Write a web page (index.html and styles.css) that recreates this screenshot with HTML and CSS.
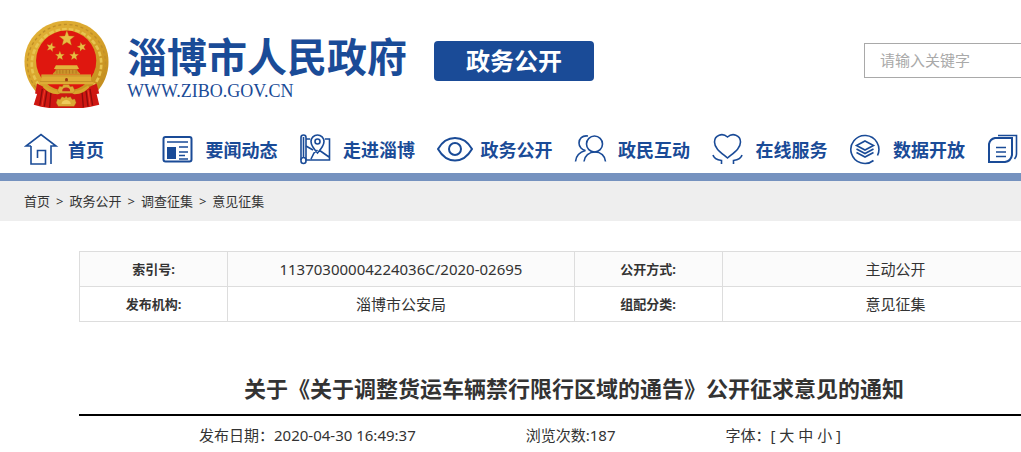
FILE: index.html
```
<!DOCTYPE html>
<html lang="zh-CN">

<head>
    <meta charset="UTF-8">
    <title>关于《关于调整货运车辆禁行限行区域的通告》公开征求意见的通知</title>
    <link rel="stylesheet" href="styles.css">
</head>

<body>

    <header class="header">
        <div class="wrap header-top">
            <a class="logo" href="#">
                <svg class="emblem" viewBox="27 28 256 272" aria-hidden="true">
                    <defs>
                        <linearGradient id="gold" x1="0" y1="0" x2="1" y2="1">
                            <stop offset="0" stop-color="#e3b43a" />
                            <stop offset=".5" stop-color="#d9a52c" />
                            <stop offset="1" stop-color="#c08a1c" />
                        </linearGradient>
                        <polygon id="star" points="0,-24 6,-8 23,-7 10,4 14,20 0,11 -14,20 -10,4 -23,-7 -6,-8" />
                    </defs>
                    <!-- wheat ring -->
                    <path d="M155 30C225 30 282 84 282 154C282 190 268 222 246 246H64C42 222 28 190 28 154C28 84 85 30 155 30Z" fill="url(#gold)" />
                    <path d="M62 232A118 118 0 1 1 248 232" fill="none" stroke="#c08f28" stroke-width="4" stroke-dasharray="9 8" />
                    <path d="M72 225A105 105 0 1 1 238 225" fill="none" stroke="#e8c450" stroke-width="8" stroke-dasharray="14 6" />
                    <circle cx="154" cy="151" r="91" fill="#df170f" />
                    <!-- stars -->
                    <g fill="#e8bd43" stroke="#b77c16">
                        <use href="#star" x="156" y="84" />
                        <use href="#star" transform="translate(108 110) rotate(15) scale(.6)" />
                        <use href="#star" transform="translate(201 109) rotate(-15) scale(.6)" />
                        <use href="#star" transform="translate(135 136) scale(.6)" />
                        <use href="#star" transform="translate(178 136) scale(.6)" />
                    </g>
                    <!-- gate -->
                    <path d="M123 165H187L193 176H117Z" fill="#e2b33b" />
                    <path d="M122 177H188V181L196 190V193H114V190L122 181Z" fill="#cb952a" />
                    <path d="M126 179V190M135 179V190M144 179V190M154 179V190M164 179V190M174 179V190M184 179V190" stroke="#a8691a" stroke-width="2" />
                    <path d="M79 193H229V211L237 215V222H73V215L79 211Z" fill="#dfad36" />
                    <path d="M79 197H229M75 214H235" stroke="#b98224" stroke-width="2" />
                    <path d="M151 213V207A4 4 0 0 1 159 207V213Z" fill="#9c3a10" />
                    <!-- ribbons -->
                    <path d="M66 220L100 238L130 246H178L208 238L246 220L254 250L246 252L254 284L228 290L205 294H102L78 290L56 284L66 252L60 250Z" fill="#cf1712" />
                    <path d="M82 236L74 286M96 242L88 290M108 246L104 292M226 236L234 286M214 242L220 290M202 246L206 292" stroke="#8d0d0c" stroke-width="4" />
                    <path d="M89 240L81 288M220 240L227 288" stroke="#f03a26" stroke-width="3" />
                    <path d="M88 226C108 240 124 244 135 240L134 252C112 254 96 244 84 232ZM220 226C200 240 184 244 173 240L174 252C196 254 212 244 224 232Z" fill="#d9a52c" />
                    <!-- gear -->
                    <path d="M128 240L134 228L142 230L146 223H162L166 230L174 228L180 240L176 249H132Z" fill="#ddab35" stroke="#a56d18" />
                    <path d="M142 243A12 11 0 0 1 166 243Z" fill="#c7241a" />
                    <path d="M124 278L128 267L136 268L141 260L150 263L154 258L158 263L167 260L172 268L180 267L184 278L178 289H130Z" fill="#dba833" stroke="#a56d18" />
                    <path d="M140 282A14 12 0 0 1 168 282Z" fill="#efcb5b" />
                </svg>
                <span class="logo-text">
                    <span class="logo-name">淄博市人民政府</span>
                    <span class="logo-url">WWW.ZIBO.GOV.CN</span>
                </span>
            </a>
            <a class="channel" href="#">政务公开</a>
            <form class="search">
                <input type="text" aria-label="关键字" placeholder="请输入关键字">
            </form>
        </div>

        <nav class="wrap nav">
            <a href="#">
                <svg class="icon" viewBox="0 0 36 34" aria-hidden="true">
                    <path d="M7 14H2L17 2.500L32 14H27V32M7 14V32H21.500V18.500H13.500V26" />
                </svg>首页
            </a>
            <a href="#">
                <svg class="icon" viewBox="0 0 36 34" aria-hidden="true">
                    <rect x="1.500" y="5" width="28" height="24.500" rx="2" stroke-width="2" />
                    <path d="M5 10H26M17 15H26M17 20H26M17 23.500H23M17 27H26" />
                    <path class="solid" d="M5 15H14V27H5Z" />
                </svg>要闻动态
            </a>
            <a href="#">
                <svg class="icon" viewBox="0 0 36 34" aria-hidden="true">
                    <rect x="2" y="3" width="5" height="28.500" rx="2.500" />
                    <path d="M4.500 5V26M2 28A2.500 2.500 0 0 1 7 28H30.500V7H26M7 7H11M7 14L14 18M12 27L15 21L18.500 18M20 18L30 25M18.500 21C14 16 12 13 12 9.500A6.500 6.500 0 0 1 25 9.500C25 13 23 16 18.500 21Z" />
                    <circle cx="18.500" cy="9.500" r="2.500" />
                </svg>走进淄博
            </a>
            <a href="#">
                <svg class="icon" viewBox="0 0 36 34" aria-hidden="true">
                    <path stroke-width="2" d="M1 17C5 10 11 6 18 6S31 10 35 17C31 24 25 28.500 18 28.500S5 24 1 17Z" />
                    <circle cx="18" cy="17" r="6" stroke-width="2" />
                </svg>政务公开
            </a>
            <a href="#">
                <svg class="icon" viewBox="0 0 36 34" aria-hidden="true">
                    <circle cx="20.500" cy="12" r="8" />
                    <path d="M10 29.500C10.500 24 15 20 21 20S31 24 31.500 29.500M14 4C8 3 5 7 5 11C5 15 8 18 11.500 18.500C6 20 2 24 1.500 29.500" />
                </svg>政民互动
            </a>
            <a href="#">
                <svg class="icon" viewBox="0 0 36 34" aria-hidden="true">
                    <path d="M15.500 26C9 20.500 2.500 16.500 2.500 10C2.500 3 10.500 .500 15.500 5C20.500 .500 28.500 3 28.500 10C28.500 16.500 22 20.500 15.500 26ZM1 23C2 27 6 28 9.500 28.500V32M30 23C29 27 25 28 21.500 28.500V32" />
                </svg>在线服务
            </a>
            <a href="#">
                <svg class="icon" viewBox="0 0 36 34" aria-hidden="true">
                    <path d="M24.500 28.500A14 14 0 1 1 28.500 23.500" />
                    <path d="M16 9L24.500 13.500L16 18L7.500 13.500ZM7.500 17L16 21.500L24.500 17M7.500 20.500L16 25L24.500 20.500" />
                </svg>数据开放
            </a>
            <a href="#" aria-label="专题专栏">
                <svg class="icon" viewBox="0 0 36 34" aria-hidden="true">
                    <path stroke-width="2" d="M8 6H25V23Q24 29 18 30H2V12Q3 7 8 6Z" />
                    <path d="M11 3.500H29.500V22Q29.500 25 27.500 27M9 15.500H19M9 20H19M9 24.500H19" />
                </svg>
            </a>
        </nav>
    </header>

    <div class="crumb-bar">
        <div class="wrap crumbs">
            <a href="#">首页</a>
            <span>&gt;</span>
            <a href="#">政务公开</a>
            <span>&gt;</span>
            <a href="#">调查征集</a>
            <span>&gt;</span>
            <a href="#">意见征集</a>
        </div>
    </div>

    <main class="wrap article">
        <table class="info">
            <tbody>
                <tr>
                    <th scope="row">索引号:</th>
                    <td>11370300004224036C/2020-02695</td>
                    <th scope="row">公开方式:</th>
                    <td>主动公开</td>
                </tr>
                <tr>
                    <th scope="row">发布机构:</th>
                    <td>淄博市公安局</td>
                    <th scope="row">组配分类:</th>
                    <td>意见征集</td>
                </tr>
            </tbody>
        </table>

        <h1>关于《关于调整货运车辆禁行限行区域的通告》公开征求意见的通知</h1>

        <div class="meta">
            <span>发布日期：2020-04-30 16:49:37</span>
            <span>浏览次数:187</span>
            <span>字体：[ <button type="button">大</button> <button type="button">中</button> <button type="button">小</button> ]</span>
        </div>
    </main>

</body>

</html>
```
FILE: styles.css
```
* {
    box-sizing: border-box;
}

body {
    margin: 0;
    font-family: "Noto Sans", "Noto Sans CJK SC", sans-serif;
    font-size: 15px;
    color: #333;
    background: #fff;
    overflow-x: hidden;
}

a {
    color: inherit;
    text-decoration: none;
}

.wrap {
    width: 100%;
    min-width: 1124px;
    max-width: 1148px;
    margin: 0 auto;
    padding-left: 24px;
}

.header {
    border-bottom: 8px solid #7592bf;
}

.header-top {
    display: flex;
    align-items: center;
    padding-top: 20px;
}

.logo {
    display: flex;
    align-items: center;
    gap: 18px;
    color: #1a4b97;
}

.emblem {
    width: 85px;
    height: 90px;
}

.logo-text {
    display: flex;
    flex-direction: column;
    padding-top: 4px;
}

.logo-name {
    font-size: 40px;
    font-weight: bold;
    line-height: 48px;
}

.logo-url {
    font-family: "Liberation Serif", serif;
    font-size: 18px;
    line-height: 20px;
}

.channel {
    width: 160px;
    margin-left: 27px;
    margin-bottom: 8px;
    border-radius: 4px;
    background: #1a4b97;
    color: #fff;
    font-size: 24px;
    font-weight: bold;
    line-height: 40px;
    text-align: center;
}

.search {
    width: 260px;
    margin-left: auto;
    margin-bottom: 10px;
}

.search input {
    display: block;
    width: 100%;
    height: 35px;
    padding: 0 15px;
    border: 1px solid #a9a9a9;
    font-family: inherit;
    font-size: 15px;
}

.search input::placeholder {
    color: #a9a9a9;
}

.nav {
    display: grid;
    grid-template-columns: repeat(8, 1fr);
    padding-top: 18px;
    padding-bottom: 3px;
}

.nav a {
    display: flex;
    align-items: center;
    gap: 8px;
    height: 42px;
    color: #1a4b97;
    font-size: 18px;
    font-weight: bold;
    white-space: nowrap;
}

.icon {
    flex: none;
    width: 36px;
    height: 34px;
    fill: none;
    stroke: #1a4b97;
    stroke-width: 1.6;
}

.icon .solid {
    fill: #1a4b97;
    stroke: none;
}

.crumb-bar {
    background: #eee;
}

.crumbs {
    display: flex;
    gap: 6px;
    font-size: 13px;
    line-height: 40px;
}

.article {
    padding: 30px 55px 0 79px;
}

.info {
    width: 100%;
    border-collapse: collapse;
    table-layout: fixed;
}

.info th,
.info td {
    height: 35px;
    padding: 0;
    border: 1px solid #ddd;
    line-height: 20px;
    text-align: center;
}

.info th {
    width: 15%;
    font-size: 13px;
}

.info tr:first-child {
    background: #fbfbfb;
}

h1 {
    margin: 48px 0 0;
    padding-bottom: 8px;
    border-bottom: 2px solid #000;
    font-size: 22px;
    line-height: 36px;
    text-align: center;
}

.meta {
    display: flex;
    gap: 110px;
    padding-left: 120px;
    line-height: 38px;
    height: 36px;
}

.meta button {
    padding: 0;
    border: none;
    background: none;
    color: inherit;
    font: inherit;
    cursor: pointer;
}
```
